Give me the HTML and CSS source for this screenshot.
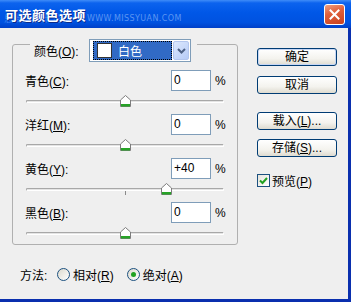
FILE: index.html
```html
<!DOCTYPE html>
<html lang="zh-CN">
<head>
  <meta charset="UTF-8" />
  <title>可选颜色选项</title>
  <link rel="stylesheet" href="styles.css">
</head>
<body>

  <div class="dialog">
    <div class="titlebar">
      <span class="title">可选颜色选项</span>
      <span class="watermark"><span class="wm-cn">思缘设计论坛</span><span class="wm-url">WWW.MISSYUAN.COM</span></span>
      <div class="close">
        <svg width="11" height="11" viewBox="0 0 11 11"><path d="M1.5 1.5 L9.5 9.5 M9.5 1.5 L1.5 9.5" stroke="#fff" stroke-width="2" stroke-linecap="square"/></svg>
      </div>
    </div>

    <div class="client">
      <div class="main">
        <div class="groupbox">
          <div class="group-head">
            <label class="head-label">颜色(<u>O</u>):</label>
            <div class="select">
              <div class="select-value">
                <span class="swatch"></span>
                <span>白色</span>
              </div>
              <div class="select-arrow">
                <svg width="9" height="6" viewBox="0 0 9 6"><path d="M1 1 L4.5 4.5 L8 1" fill="none" stroke="#4d6185" stroke-width="2"/></svg>
              </div>
            </div>
          </div>

          <div class="channel">
            <div class="channel-row">
              <label>青色(<u>C</u>):</label>
              <div class="num">0</div>
              <span class="pct">%</span>
            </div>
            <div class="slider">
              <div class="track"></div>
              <span class="tick"></span>
              <svg class="thumb" style="left: 50%" width="11" height="12" viewBox="0 0 11 12"><path d="M0.5 5 L5.5 0.5 L10.5 5 V11.5 H0.5 Z" fill="#fff" stroke="#7d7d7d"/><rect x="1" y="9" width="9" height="2.5" fill="#27a327"/></svg>
            </div>
          </div>

          <div class="channel">
            <div class="channel-row">
              <label>洋红(<u>M</u>):</label>
              <div class="num">0</div>
              <span class="pct">%</span>
            </div>
            <div class="slider">
              <div class="track"></div>
              <span class="tick"></span>
              <svg class="thumb" style="left: 50%" width="11" height="12" viewBox="0 0 11 12"><path d="M0.5 5 L5.5 0.5 L10.5 5 V11.5 H0.5 Z" fill="#fff" stroke="#7d7d7d"/><rect x="1" y="9" width="9" height="2.5" fill="#27a327"/></svg>
            </div>
          </div>

          <div class="channel">
            <div class="channel-row">
              <label>黄色(<u>Y</u>):</label>
              <div class="num">+40</div>
              <span class="pct">%</span>
            </div>
            <div class="slider">
              <div class="track"></div>
              <span class="tick"></span>
              <svg class="thumb" style="left: 70.5%" width="11" height="12" viewBox="0 0 11 12"><path d="M0.5 5 L5.5 0.5 L10.5 5 V11.5 H0.5 Z" fill="#fff" stroke="#7d7d7d"/><rect x="1" y="9" width="9" height="2.5" fill="#27a327"/></svg>
            </div>
          </div>

          <div class="channel">
            <div class="channel-row">
              <label>黑色(<u>B</u>):</label>
              <div class="num">0</div>
              <span class="pct">%</span>
            </div>
            <div class="slider">
              <div class="track"></div>
              <span class="tick"></span>
              <svg class="thumb" style="left: 50%" width="11" height="12" viewBox="0 0 11 12"><path d="M0.5 5 L5.5 0.5 L10.5 5 V11.5 H0.5 Z" fill="#fff" stroke="#7d7d7d"/><rect x="1" y="9" width="9" height="2.5" fill="#27a327"/></svg>
            </div>
          </div>
        </div>

        <div class="side">
          <div class="btn btn-ok">确定</div>
          <div class="btn btn-cancel">取消</div>
          <div class="btn btn-load">载入(<u>L</u>)...</div>
          <div class="btn btn-save">存储(<u>S</u>)...</div>
          <div class="check-row">
            <span class="checkbox">
              <svg width="9" height="9" viewBox="0 0 9 9"><path d="M1 4.5 L3.5 7 L8 2" fill="none" stroke="#21a121" stroke-width="2"/></svg>
            </span>
            <span>预览(<u>P</u>)</span>
          </div>
        </div>
      </div>

      <div class="method">
        <span class="method-label">方法:</span>
        <span class="radio"></span>
        <span class="radio-text">相对(<u>R</u>)</span>
        <span class="radio checked"><span class="dot"></span></span>
        <span class="radio-text">绝对(<u>A</u>)</span>
      </div>
    </div>
  </div>

</body>
</html>
```

FILE: styles.css
```css
* {
  margin: 0;
  padding: 0;
  box-sizing: border-box;
}

body {
  width: 351px;
  height: 302px;
  overflow: hidden;
  font-family: Tahoma, "Liberation Sans", "Noto Sans CJK SC", sans-serif;
  font-size: 12px;
  color: #000;
}

.dialog {
  width: 351px;
  height: 302px;
  display: flex;
  flex-direction: column;
}

/* title bar */

.titlebar {
  position: relative;
  height: 28px;
  flex-shrink: 0;
  display: flex;
  align-items: center;
  padding-left: 5px;
  background: linear-gradient(180deg, #3f8cf8 0, #0c63ee 3px, #0057e7 45%, #0052e0 80%, #0040c8 100%);
}

.title {
  position: relative;
  z-index: 1;
  font-family: "Noto Sans CJK SC", sans-serif;
  font-size: 13px;
  font-weight: bold;
  color: #fff;
  letter-spacing: 0.5px;
  text-shadow: 1px 1px 0 #0a2a8a;
}

.watermark {
  position: absolute;
  left: 4px;
  top: 12px;
  display: flex;
  align-items: center;
  color: #5b95f2;
}

.wm-cn {
  width: 83px;
  font-family: "Noto Sans CJK SC", sans-serif;
  font-size: 9px;
  letter-spacing: 3px;
  color: #3f80ee;
}

.wm-url {
  font-family: "DejaVu Sans", sans-serif;
  font-size: 8px;
  letter-spacing: 0.4px;
}

.close {
  margin-left: auto;
  margin-right: 6px;
  width: 21px;
  height: 21px;
  border: 1px solid #fff;
  border-radius: 3px;
  background: linear-gradient(160deg, #f0a080 0, #e0603c 40%, #c8401e 100%);
  display: flex;
  justify-content: center;
  align-items: center;
}

/* client */

.client {
  flex: 1;
  background: #efefef;
  border-right: 3px solid #0a2fae;
  border-bottom: 3px solid #0a2fae;
}

.main {
  display: flex;
  align-items: flex-start;
}

.groupbox {
  margin-top: 16px;
  margin-left: 12px;
  width: 226px;
  border: 1px solid #b0b0b0;
  border-radius: 3px;
  padding-bottom: 5px;
}

.group-head {
  display: inline-flex;
  align-items: center;
  margin-top: -8px;
  margin-left: 17px;
  padding: 0 6px 0 4px;
  background: #efefef;
}

.head-label {
  width: 55px;
}

.select {
  width: 102px;
  height: 23px;
  border: 1px solid #7f9db9;
  background: #fff;
  display: flex;
  padding: 1px;
}

.select-value {
  width: 81px;
  margin-left: 2px;
  background: #316ac5;
  outline: 1px dotted #000;
  outline-offset: -1px;
  color: #fff;
  display: flex;
  align-items: center;
  padding-left: 4px;
  gap: 6px;
}

.swatch {
  width: 15px;
  height: 15px;
  background: #fff;
  border: 1px solid #333;
}

.select-arrow {
  margin-left: 1px;
  width: 16px;
  background: linear-gradient(135deg, #dce8fd, #b6cbf7);
  border: 1px solid #b3c6ee;
  border-radius: 2px;
  display: flex;
  justify-content: center;
  align-items: center;
}

.channel {
  margin-top: 7px;
}

.group-head + .channel {
  margin-top: 8px;
}

.channel-row {
  display: flex;
  align-items: center;
  height: 21px;
  padding-left: 12px;
}

.channel-row label {
  width: 146px;
}

.num {
  width: 40px;
  height: 21px;
  border: 1px solid #7f9db9;
  background: #fff;
  padding-left: 2px;
  line-height: 19px;
}

.pct {
  margin-left: 4px;
}

.slider {
  position: relative;
  margin-top: 4px;
  margin-left: 13px;
  width: 198px;
  height: 12px;
}

.track {
  position: absolute;
  left: 0;
  right: 0;
  top: 5px;
  height: 3px;
  border: 1px solid #a8a8a8;
  border-bottom-color: #fff;
  border-right-color: #fff;
  border-radius: 2px;
  background: #e4e4e4;
}

.tick {
  position: absolute;
  left: 99px;
  top: 8px;
  width: 1px;
  height: 4px;
  background: #8a8a8a;
}

.thumb {
  position: absolute;
  top: 0;
  margin-left: -5px;
}

/* buttons column */

.side {
  margin-top: 20px;
  margin-left: 19px;
  width: 80px;
  display: flex;
  flex-direction: column;
}

.btn {
  height: 18px;
  border: 1px solid #003c74;
  border-radius: 3px;
  background: linear-gradient(180deg, #ffffff 0, #f4f3ee 60%, #dedbd0 100%);
  display: flex;
  justify-content: center;
  align-items: center;
  line-height: 1;
}

.btn-ok {
  box-shadow: inset 0 0 0 1px #c6d6f5;
}

.btn-cancel {
  margin-top: 10px;
}

.btn-load {
  margin-top: 18px;
}

.btn-save {
  margin-top: 9px;
}

.check-row {
  margin-top: 15px;
  display: flex;
  align-items: center;
  gap: 2px;
}

.checkbox {
  width: 13px;
  height: 13px;
  border: 1px solid #1c5180;
  background: linear-gradient(135deg, #e6e4dc, #fff);
  display: flex;
  justify-content: center;
  align-items: center;
}

/* method row */

.method {
  margin-top: 23px;
  margin-left: 20px;
  display: flex;
  align-items: center;
  height: 13px;
}

.method-label {
  width: 37px;
}

.radio {
  width: 13px;
  height: 13px;
  border: 1px solid #1c5180;
  border-radius: 50%;
  background: linear-gradient(135deg, #dcd9cd, #fff);
  display: flex;
  justify-content: center;
  align-items: center;
}

.radio-text {
  margin-left: 3px;
  margin-right: 13px;
}

.dot {
  width: 5px;
  height: 5px;
  border-radius: 50%;
  background: #21a121;
}
```
